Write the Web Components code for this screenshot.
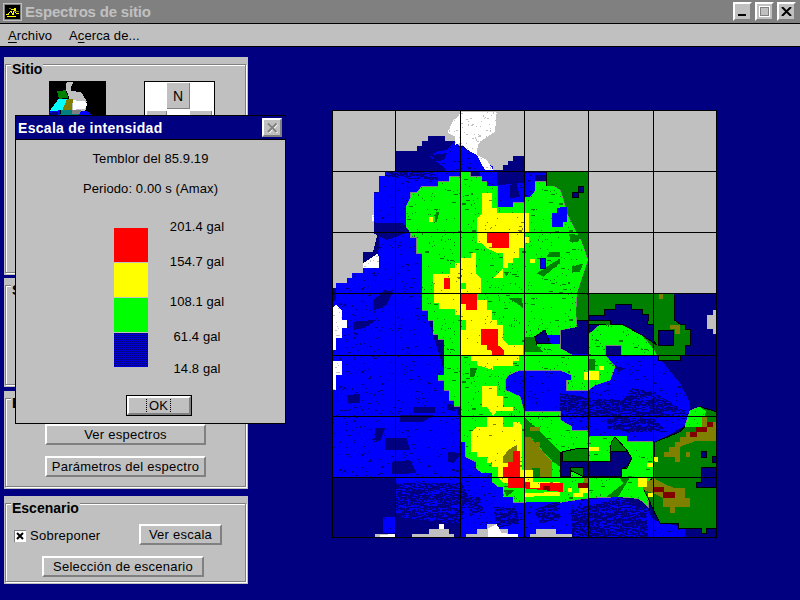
<!DOCTYPE html>
<html>
<head>
<meta charset="utf-8">
<title>Espectros de sitio</title>
<style>
  html, body { margin: 0; height: 100%; background: #000080; overflow: hidden; }
  body { position: relative; font-family: "Liberation Sans", Arial, sans-serif; font-size: 13px; color: #000; }
  .main { display: flex; align-items: flex-start; padding: 10px 0 0 4px; }
  .col { width: 244px; flex: none; display: flex; flex-direction: column; }
  .stack { display: flex; flex-direction: column; align-items: center; gap: 11px; padding-top: 25px; }
  .sitio { display: flex; justify-content: flex-start; gap: 38px; padding: 16px 0 0 43px; }
</style>
</head>
<body>
<title-bar>Espectros de sitio</title-bar>
<menu-bar></menu-bar>
<div class="main">
  <div class="col">
    <group-box label="Sitio" style="height:218px">
      <div class="sitio"><site-thumb></site-thumb><compass-pad></compass-pad></div>
    </group-box>
    <group-box label="Suelo" style="height:109px;margin-top:3px"></group-box>
    <group-box label="Espectro" style="height:98px;margin-top:4px">
      <div class="stack">
        <win-button style="width:161px;height:21px">Ver espectros</win-button>
        <win-button style="width:161px;height:21px">Parámetros del espectro</win-button>
      </div>
    </group-box>
    <group-box label="Escenario" style="height:88px;margin-top:7px">
      <scenario-form></scenario-form>
    </group-box>
  </div>
  <intensity-map style="margin:53px 0 0 84px"></intensity-map>
</div>
<scale-dialog></scale-dialog>

<script>
const bevel = `border: 2px solid; border-color: #fff #808080 #808080 #fff; background: #c0c0c0; box-sizing: border-box;`;

class TitleBar extends HTMLElement {
  connectedCallback() {
    this.attachShadow({ mode: 'open' });
    this.shadowRoot.innerHTML = `
      <style>
        :host { display: flex; align-items: center; height: 23px; background: #808080; border-bottom: 1px solid #000; padding: 0 4px 0 3px; }
        .icon { width: 19px; height: 18px; flex: none; display: block; }
        .name { flex: 1; margin-left: 3px; color: #c0c0c0; font: bold 15px "Liberation Sans", Arial, sans-serif; letter-spacing: -.2px; }
        .btns { display: flex; gap: 3px; }
        .b { ${bevel} width: 19px; height: 19px; display: flex; align-items: center; justify-content: center; }
        svg { display: block; }
      </style>
      <svg class="icon" viewBox="0 0 19 18" shape-rendering="crispEdges">
        <rect width="19" height="18" fill="#c0c0c0"/><rect x="1" y="1" width="17" height="16" fill="#808080"/>
        <rect x="2" y="2" width="15" height="14" fill="#000"/>
        <path d="M3 11h3M5 11l3-3 2 4 2-7 1 5h3M8 6h5M4 13h9" stroke="#ff0" fill="none"/>
        <path d="M11 8h5M6 5h2" stroke="#808000" fill="none"/>
      </svg>
      <span class="name"><slot></slot></span>
      <div class="btns">
        <div class="b"><svg width="9" height="9" shape-rendering="crispEdges"><rect x="0" y="7" width="8" height="2" fill="#000"/></svg></div>
        <div class="b"><svg width="11" height="11" shape-rendering="crispEdges"><rect x=".5" y=".5" width="10" height="10" fill="none" stroke="#fff"/><rect x="1.5" y="1.5" width="8" height="8" fill="none" stroke="#808080"/></svg></div>
        <div class="b"><svg width="11" height="9"><path d="M1 0l9 9M10 0l-9 9" stroke="#000" stroke-width="2" fill="none"/></svg></div>
      </div>`;
  }
}
customElements.define('title-bar', TitleBar);

class MenuBar extends HTMLElement {
  connectedCallback() {
    this.attachShadow({ mode: 'open' });
    this.shadowRoot.innerHTML = `
      <style>
        :host { display: flex; align-items: center; gap: 17px; height: 22px; background: #c0c0c0; padding: 0 8px; border-bottom: 1px solid #000; font: 13px "Liberation Sans", Arial, sans-serif; letter-spacing: .1px; }
        u { text-underline-offset: 2px; }
      </style>
      <span><u>A</u>rchivo</span>
      <span>A<u>c</u>erca de...</span>`;
  }
}
customElements.define('menu-bar', MenuBar);

class GroupBox extends HTMLElement {
  connectedCallback() {
    this.attachShadow({ mode: 'open' });
    this.shadowRoot.innerHTML = `
      <style>
        :host { display: block; background: #c0c0c0; box-sizing: border-box; padding: 7px 2px 2px 1px; }
        .frame { position: relative; height: 100%; box-sizing: border-box; border: 1px solid #808080; box-shadow: 1px 1px 0 #fff, inset 1px 1px 0 #fff; }
        .label { position: absolute; left: 5px; top: -3px; padding: 0 1px; background: #c0c0c0; font: bold 14px/15px "Liberation Sans", Arial, sans-serif; }
      </style>
      <div class="frame"><span class="label"></span><slot></slot></div>`;
    this.shadowRoot.querySelector('.label').textContent = this.getAttribute('label');
  }
}
customElements.define('group-box', GroupBox);

class WinButton extends HTMLElement {
  connectedCallback() {
    this.attachShadow({ mode: 'open' });
    this.shadowRoot.innerHTML = `
      <style>
        :host { ${bevel} display: flex; align-items: center; justify-content: center; font: 13px "Liberation Sans", Arial, sans-serif; letter-spacing: .25px; white-space: nowrap; }
      </style>
      <slot></slot>`;
  }
}
customElements.define('win-button', WinButton);

class SiteThumb extends HTMLElement {
  connectedCallback() {
    this.attachShadow({ mode: 'open' });
    const shapes = [
      ['#c0c0c0', '65,15 85,15 78,30 78,42 108,45 125,72 120,110 80,112 72,60 62,35'],
      ['#008000', '36,42 62,40 70,62 42,66'],
      ['#00ffff', '40,66 66,66 55,100 14,102'],
      ['#808000', '66,66 84,66 80,100 52,100'],
      ['#fff', '84,70 120,72 128,84 118,96 84,98'],
      ['#008080', '48,100 105,100 105,120 45,120'],
      ['#808080', '80,98 110,98 105,110 80,110'],
      ['#0000ff', '14,102 46,100 46,120 10,120'],
      ['#0000ff', '108,102 130,104 146,118 146,120 100,120'],
      ['#000080', '12,108 40,104 40,120 12,120']
    ];
    const polys = shapes.map(s => `<polygon fill="${s[0]}" points="${s[1]}"/>`).join('');
    this.shadowRoot.innerHTML = `
      <style>:host { display: block; width: 57px; height: 40px; flex: none; } svg { display: block; }</style>
      <svg width="57" height="40" viewBox="12 12 171 120" shape-rendering="crispEdges"><rect x="12" y="12" width="171" height="120" fill="#000"/>${polys}</svg>`;
  }
}
customElements.define('site-thumb', SiteThumb);

class CompassPad extends HTMLElement {
  connectedCallback() {
    this.attachShadow({ mode: 'open' });
    this.shadowRoot.innerHTML = `
      <style>
        :host { display: grid; grid-template-columns: 20px 23px 22px; grid-auto-rows: 26px; row-gap: 2px; justify-content: center; width: 71px; height: 60px; background: #fff; border: 1px solid #000; box-sizing: border-box; padding: 1px 0; }
        .k { background: #c0c0c0; border-right: 1px solid #808080; border-bottom: 1px solid #808080; display: flex; align-items: center; justify-content: center; font: 14px "Liberation Sans", Arial, sans-serif; }
      </style>
      <span></span><div class="k">N</div><span></span>
      <div class="k"></div><span></span><div class="k"></div>`;
  }
}
customElements.define('compass-pad', CompassPad);

class ScenarioForm extends HTMLElement {
  connectedCallback() {
    this.attachShadow({ mode: 'open' });
    this.shadowRoot.innerHTML = `
      <style>
        :host { display: block; padding: 20px 0 0 8px; font: 13px "Liberation Sans", Arial, sans-serif; letter-spacing: .25px; }
        .row { display: flex; align-items: center; }
        .chk { display: flex; align-items: center; gap: 4px; width: 125px; padding-top: 2px; }
        .box { width: 12px; height: 12px; flex: none; display: block; }
        .wide { margin: 11px 0 0 28px; }
      </style>
      <div class="row">
        <label class="chk">
          <svg class="box" viewBox="0 0 12 12" shape-rendering="crispEdges">
            <rect width="12" height="12" fill="#fff"/><path d="M0 11.5V0h11.5" fill="none" stroke="#808080" transform="translate(.5 .5)"/>
            <path d="M3 3l6 6M9 3l-6 6" stroke="#000" stroke-width="2" shape-rendering="auto"/>
          </svg>
          <span>Sobreponer</span>
        </label>
        <win-button style="width:83px;height:21px">Ver escala</win-button>
      </div>
      <win-button class="wide" style="width:162px;height:21px">Selección de escenario</win-button>`;
  }
}
customElements.define('scenario-form', ScenarioForm);

class ScaleDialog extends HTMLElement {
  connectedCallback() {
    this.attachShadow({ mode: 'open' });
    this.shadowRoot.innerHTML = `
      <style>
        :host { position: absolute; left: 15px; top: 115px; width: 271px; height: 309px; box-sizing: border-box; border: 1px solid #000; background: #c0c0c0; display: flex; flex-direction: column; font: 13px "Liberation Sans", Arial, sans-serif; letter-spacing: .1px; }
        .cap { height: 23px; flex: none; background: #000080; border-bottom: 1px solid #000; display: flex; align-items: center; justify-content: space-between; padding: 0 3px 0 2px; color: #fff; font: bold 14px "Liberation Sans", Arial, sans-serif; letter-spacing: .3px; }
        .x { ${bevel} width: 20px; height: 19px; display: flex; align-items: center; justify-content: center; }
        .line { text-align: center; }
        .t1 { margin-top: 11px; }
        .t2 { margin-top: 15px; }
        .legend { display: flex; margin: 32px 0 0 98px; }
        .bars { display: flex; flex-direction: column; gap: 1px; width: 34px; }
        .bars i, .bars svg { display: block; height: 34px; }
        .labels { width: 70px; margin: -9px 0 0 14px; display: flex; flex-direction: column; align-items: center; }
        .labels span { display: block; height: 15px; line-height: 15px; }
        .ok { align-self: center; margin: 19px 0 0 16px; width: 66px; height: 21px; border: 1px solid #000; box-sizing: border-box; display: flex; }
        .ok div { ${bevel} flex: 1; display: flex; align-items: center; justify-content: center; }
        .ok b { font-weight: normal; border: 1px dotted #000; border-width: 0 1px; padding: 0 2px; line-height: 13px; }
      </style>
      <div class="cap"><span>Escala de intensidad</span>
        <div class="x"><svg width="12" height="11"><path d="M2 1.5l8.5 8.5M10.5 1.5L2 10" stroke="#fff" stroke-width="2" fill="none" transform="translate(.7 .7)"/><path d="M2 1.5l8.5 8.5M10.5 1.5L2 10" stroke="#808080" stroke-width="2" fill="none"/></svg></div>
      </div>
      <div class="line t1">Temblor del 85.9.19</div>
      <div class="line t2">Periodo: 0.00 s (Amax)</div>
      <div class="legend">
        <div class="bars"><i style="background:#f00"></i><i style="background:#ff0"></i><i style="background:#0f0"></i>
          <svg width="34" height="34" shape-rendering="crispEdges"><defs><pattern id="dith" width="2" height="2" patternUnits="userSpaceOnUse"><rect width="2" height="2" fill="#0000e0"/><rect width="1" height="1" fill="#000080"/><rect x="1" y="1" width="1" height="1" fill="#000080"/></pattern></defs><rect width="34" height="34" fill="url(#dith)"/></svg>
        </div>
        <div class="labels">
          <span>201.4 gal</span><span style="margin-top:20px">154.7 gal</span><span style="margin-top:25px">108.1 gal</span><span style="margin-top:20px">61.4 gal</span><span style="margin-top:17px">14.8 gal</span>
        </div>
      </div>
      <div class="ok"><div><b>OK</b></div></div>`;
  }
}
customElements.define('scale-dialog', ScaleDialog);

// map shapes are traced in crop coords: key = crop offset, then x/3 + ox, y/3 + oy
const crops = { a: [320, 100], b: [560, 100], c: [320, 320], d: [560, 320], p: null };
function pts(key, s) {
  const o = crops[key];
  return s.trim().split(/\s+/).map(q => {
    const [x, y] = q.split(',').map(Number);
    return o ? (o[0] + x / 3).toFixed(1) + ',' + (o[1] + y / 3).toFixed(1) : x + ',' + y;
  }).join(' ');
}
function many() {
  const out = [];
  for (let i = 0; i < arguments.length; i += 2) out.push(pts(arguments[i], arguments[i + 1]));
  return out.join(' ');
}
function rectZ(key, x1, y1, x2, y2) {
  return pts(key, `${x1},${y1} ${x2},${y1} ${x2},${y2} ${x1},${y2}`);
}

class IntensityMap extends HTMLElement {
  speck(id, w, h, n, color, seed, big) {
    let s = seed, r = '';
    const rnd = m => { s = (s * 16807) % 2147483647; return s % m; };
    for (let i = 0; i < n; i++) {
      const bw = 1 + (rnd(5) === 0 ? big : 0), bh = 1 + (rnd(9) === 0 ? 1 : 0);
      r += `<rect x="${rnd(w)}" y="${rnd(h)}" width="${bw}" height="${bh}"/>`;
    }
    return `<pattern id="${id}" patternUnits="userSpaceOnUse" width="${w}" height="${h}"><g fill="${color}">${r}</g></pattern>`;
  }
  connectedCallback() {
    this.attachShadow({ mode: 'open' });

    const land = many('p', '395,151 417,151 417,146 422,146 422,141 428,141 428,136 445,136 445,141 455,141 455,146 470,146 470,151 477,151 477,160 483,160 488,165 492,170 503,170 503,165 508,165 508,161 513,161 513,156 524,156 524,171 588,171 588,293 717,293 717,538 332,538 332,288 336,288 336,283 347,283 347,278 352,278 352,273 363,273 363,252 373,252 378,232 374,232 374,192 379,192 379,176 385,176 385,171 395,171');

    const blue = [
      pts('a', '330,170 350,155 380,150 405,125 420,138 450,155 470,165 490,185 520,200 520,213 380,213 370,200'),
      many('a', '195,213 420,213 450,230 485,245 530,258 535,250 620,250 620,320 600,330 600,400 420,400 420,580 330,640 325,660',
           'c', '420,300 720,300 720,490 420,490 225,490 225,472 35,472 35,0',
           'a', '35,660 35,605 48,600 48,548 80,548 80,533 97,533 97,518 130,518 130,505 175,505 175,455 178,430 175,395 162,362 162,275 178,275 178,228 195,228'),
      pts('a', '480,215 530,215 530,258 480,240'),
      pts('a', '615,220 677,220 677,245 645,245 645,275 630,292 615,292'),
      pts('c', '555,170 600,150 720,150 720,290 555,290'),
      pts('d', '0,100 150,105 290,105 360,190 390,250 390,290 370,320 325,345 290,365 200,365 200,350 85,350 0,320'),
      pts('c', '420,480 720,480 720,652 600,652 420,652 420,600 450,540'),
      pts('d', '0,540 60,540 30,652 0,652'),
      pts('d', '60,540 170,530 200,540 60,570'),
      pts('d', '262,565 280,600 320,610 375,625 375,652 262,652'),
      pts('c', '190,590 225,590 225,640 190,640')
    ];
    // third value: mottle the blob with blue so it is not a flat shape
    const navyBlobs = [
      ['a', '162,370 250,370 270,395 200,420 162,400'],
      ['a', '335,165 380,160 372,180 345,185'],
      ['a', '160,600 195,570 220,575 200,615 160,630'],
      ['a', '205,213 355,213 355,240 240,235 195,228', 1],
      ['a', '530,213 612,213 612,248 530,256'],
      ['a', '570,255 590,250 600,290 570,295'],
      ['a', '645,225 677,225 677,245 645,245'],
      ['c', '100,5 170,0 130,25 100,30'],
      ['c', '195,355 260,355 270,390 195,390'],
      ['c', '165,325 195,325 180,365 165,360'],
      ['c', '215,425 270,420 290,460 215,462'],
      ['c', '240,285 340,285 310,305 240,305'],
      ['c', '385,395 425,400 400,430 385,425'],
      ['c', '280,260 345,260 345,280 280,280'],
      ['c', '80,225 120,222 120,250 85,250'],
      ['c', '380,250 420,260 400,272 380,270'],
      ['d', '0,220 100,235 190,240 215,205 280,215 375,275 390,290 300,290 0,290', 1],
      ['d', '140,290 280,295 320,335 200,335 140,325', 1],
      ['d', '165,138 195,145 175,155'],
      ['c', '720,5 660,45 720,45'],
      ['c', '440,530 480,530 490,570 450,590', 1],
      ['c', '520,560 590,565 600,610 530,625', 1],
      ['c', '640,570 720,540 720,600 660,610', 1],
      ['d', '30,570 175,535 260,565 265,652 40,652', 1]
    ];

    const mainGreen = many(
      'a', '355,245 388,245 388,230 420,230 420,215 450,215 450,230 485,230 485,245 500,245 500,258 532,258 532,322 580,322 580,308 613,308 613,292 630,292 645,275 645,245 677,245 677,258 700,258 720,270',
      'b', '10,300 22,345 45,390 62,420 83,480 70,520 50,580 47,640',
      'd', '50,20 0,30 0,85 35,105 135,105 165,140 150,180 105,195 85,210 20,210 20,180 35,180 35,165 0,150',
      'c', '720,150 600,150 565,165 555,180 555,210 600,230 612,275 720,275 720,530 613,547 580,547 580,530 550,530 550,500 535,500 517,485 517,458 485,458 468,443 468,425 437,410 437,365 420,365 420,258 403,258 403,240 388,240 388,210 372,210 372,180 355,180 355,165 372,165 372,58 355,58 355,42 340,42 340,0',
      'a', '325,660 325,630 306,630 306,460 290,460 290,412 272,412 272,397 258,380 258,322 272,292 272,278 290,278 305,260 355,260');
    const greens = [
      mainGreen,
      pts('d', '120,15 185,15 245,45 280,88 290,105 185,105 185,75 135,75 135,105 85,105 85,45'),
      pts('d', '0,300 35,320 35,332 85,332 85,348 200,348 200,365 280,365 280,470 250,505 265,535 265,560 250,545 233,535 180,530 90,533 0,547'),
      pts('d', '370,590 385,595 440,612 440,625 375,625'),
      pts('d', '285,550 305,550 305,590 285,570'),
      pts('d', '390,272 420,260 438,275 438,320 375,320')
    ];

    const darkGreenLined = [
      pts('p', '546,171 588,171 588,320 546,320'),
      many('p', '588,293 674,293', 'd', '343,0 360,12 375,12 375,28 390,28 390,75 375,75 375,105 360,105 360,120 295,120 295,105 280,105 280,88 135,20 135,12 85,12'),
      many('d', '285,365 325,350 360,335 375,320 400,275 420,260 469,275 469,410 460,410 460,428 469,428 469,625 440,625 440,640 425,640 425,625 355,625 355,610 300,610 280,570 265,535 250,505 280,470'),
      pts('d', '8,395 55,385 85,385 85,425 150,425 150,393 155,365 165,350 200,390 215,415 200,445 185,445 185,470 70,470 8,440')
    ];
    const navyLined = [
      many('b', '85,660 85,645 132,645 132,628 165,628 165,612 215,612 215,628 248,628 248,643 265,643 265,660', 'd', '262,12 280,12 280,60 290,75 245,45 185,12 150,12 150,0 85,0'),
      pts('d', '295,30 340,30 340,75 295,75'),
      pts('d', '0,400 8,395 8,425 150,425 150,393 200,393 215,415 200,440 185,445 185,470 70,470 70,443 30,443 30,470 0,470'),
      pts('d', '425,443 469,443 469,503 408,503 408,487 425,487'),
      rectZ('d', 423, 393, 440, 412),
      pts('d', '458,410 469,410 469,428 458,428'),
      rectZ('b', 37, 277, 55, 293), rectZ('b', 55, 259, 71, 277)
    ];

    const yellow = [
      pts('a', '487,280 515,280 515,325 532,325 532,340 628,340 628,397 613,397 613,445 597,445 597,475 580,475 580,490 565,490 565,505 550,505 550,535 520,535 533,520 550,505 550,460 533,460 500,445 485,430 470,430 470,355 487,340'),
      pts('a', '340,522 390,522 390,505 405,505 405,490 420,490 420,475 453,475 453,460 468,460 468,520 483,535 483,580 470,580 470,600 500,600 500,630 515,630 515,660 420,660 420,645 405,645 405,627 358,627 358,610 342,610'),
      pts('c', '420,30 438,30 438,0 530,0 530,15 550,15 550,60 565,75 610,75 610,105 597,105 597,122 580,122 580,137 520,137 520,150 470,135 470,122 453,122 453,105 420,105'),
      pts('c', '487,197 530,197 530,228 550,228 550,260 580,260 580,272 530,272 520,288 500,260 487,260'),
      pts('c', '500,290 550,290 550,320 580,320 580,305 597,305 607,320 607,450 640,450 640,490 550,490 535,472 535,442 517,442 517,428 500,428 500,410 470,410 470,395 453,395 453,335 470,322 500,320'),
      rectZ('a', 613, 412, 628, 428), rectZ('a', 630, 478, 645, 490), rectZ('a', 327, 352, 340, 365),
      pts('d', '72,155 85,155 85,152 118,152 118,180 72,180'), rectZ('d', 118, 138, 132, 150),
      rectZ('d', 85, 380, 118, 393), rectZ('d', 262, 430, 280, 440), rectZ('d', 282, 410, 295, 425),
      rectZ('d', 233, 473, 262, 500), rectZ('d', 265, 520, 280, 530), rectZ('d', 25, 505, 35, 515),
      rectZ('d', 40, 518, 70, 530), rectZ('d', 58, 505, 85, 518),
      pts('c', '612,487 720,487 720,530 612,530')
    ];
    const red = [
      pts('a', '500,397 567,397 567,445 517,445 517,428 500,428'),
      rectZ('a', 372, 533, 390, 567),
      pts('a', '422,580 470,580 470,630 437,630 437,613 422,613'),
      pts('c', '483,27 533,27 533,75 552,90 552,105 517,105 517,92 500,90 500,75 483,75'),
      pts('c', '580,393 600,393 600,472 612,472 612,505 565,505 565,472 550,472 550,440 565,440 565,425 580,425'),
      pts('c', '612,487 630,487 630,503 660,503 660,490 720,490 720,515 660,518 612,518'),
      rectZ('d', 0, 490, 8, 515)
    ];
    const tile = (c, list) => list.map(p => `<polygon fill="${c}" points="${p}"/>`).join('');

    const overGreenDark = [
      pts('a', '347,335 358,335 350,365 345,365'),
      pts('a', '565,595 605,595 610,625 590,610'),
      pts('a', '690,455 720,455 720,470 680,470'),
      pts('a', '650,520 720,475 720,490 670,530'),
      pts('a', '550,515 568,515 560,530'),
      pts('c', '450,143 472,143 462,172 450,170'),
      pts('c', '615,50 650,50 650,75 668,95 615,95'),
      pts('c', '613,290 660,335 720,395 720,440 693,420 630,350 613,350'),
      rectZ('c', 635, 445, 660, 472),
      pts('b', '28,402 65,405 55,425 30,425'),
      pts('b', '35,500 70,490 60,515 35,518'),
      rectZ('d', 85, 118, 105, 150),
      pts('d', '140,530 190,490 180,475 210,472 175,530'),
      pts('c', '550,510 585,510 560,530')
    ];
    const olive = [
      pts('c', '550,410 565,390 590,375 590,393 580,393 580,425 550,430'),
      pts('c', '613,350 630,350 695,425 695,472 660,472 660,445 635,445 635,472 620,472 613,440'),
      rectZ('c', 630, 320, 660, 333), rectZ('c', 647, 365, 660, 378),
      pts('d', '425,290 440,290 440,305 469,305 469,362 410,362 360,380 360,425 345,425 345,410 312,410 312,395 328,395 328,380 345,380 345,365 360,365 360,350 378,350 378,335 408,335 408,320 425,320'),
      rectZ('d', 378, 395, 390, 410),
      pts('d', '250,490 283,475 310,490 345,505 375,505 375,535 390,535 390,560 345,560 345,578 330,578 330,560 310,560 310,535 280,520 250,510'),
      pts('d', '330,15 360,15 360,42 345,42 345,28 330,28'),
      rectZ('b', 297, 582, 309, 597),
      rectZ('d', 72, 475, 85, 488)
    ];
    const maroon = [
      pts('d', '408,320 440,320 440,305 460,305 460,320 440,320 440,335 408,335'),
      rectZ('d', 390, 335, 410, 350),
      pts('d', '283,500 312,500 312,517 345,517 345,534 310,534 310,517 283,517'),
      rectZ('d', 55, 488, 85, 503),
      rectZ('c', 670, 498, 690, 518)
    ];

    const whites = [
      pts('a', '385,90 400,60 415,50 420,35 530,35 525,95 480,125 470,150 470,165 500,180 520,210 495,210 470,165 450,155 420,130 405,135 405,110 385,100'),
      pts('a', '130,490 175,460 178,503 130,503'), rectZ('a', 155, 345, 162, 362),
      pts('a', '35,630 48,612 65,630 65,660 35,660'),
      pts('c', '35,0 80,0 80,25 65,25 65,55 48,55 48,90 35,90'),
      pts('c', '35,122 65,122 65,165 48,165 48,210 35,210')
    ];
    const grays = [
      pts('c', '275,642 327,642 327,627 357,627 357,612 372,612 372,627 387,627 387,642 402,642 402,652 275,652'),
      pts('c', '437,642 470,642 470,627 500,627 500,612 530,612 530,627 565,627 565,642 595,642 595,652 437,652'),
      pts('c', '630,642 647,642 647,627 708,627 708,642 720,642 720,652 630,652'),
      rectZ('d', 0, 642, 36, 652),
      pts('d', '440,0 469,0 469,42 460,42 460,28 440,28'),
      pts('b', '440,660 440,645 459,645 459,630 469,630 469,660'),
      pts('c', '165,642 225,642 225,652 165,652')
    ];
    const whiteBits = [
      pts('c', '180,645 225,642 225,652 180,652'),
      pts('c', '505,625 530,612 545,640 595,642 595,652 505,652'),
      rectZ('c', 357, 612, 372, 627)
    ];

    let grid = '';
    [332, 395, 460, 524, 588, 653, 716].forEach(x => grid += `<path d="M${x}.5 110V538"/>`);
    [110, 171, 232, 293, 355, 416, 477, 537].forEach(y => grid += `<path d="M332 ${y}.5H717"/>`);

    this.shadowRoot.innerHTML = `
      <style>
        :host { display: block; width: 387px; height: 429px; flex: none; }
        svg { display: block; }
      </style>
      <svg width="387" height="429" viewBox="332 110 387 429" shape-rendering="crispEdges">
        <defs>
          ${this.speck('sg', 97, 89, 170, '#008000', 11, 3)}
          ${this.speck('sb', 113, 83, 230, '#000080', 29, 2)}
          ${this.speck('sy', 61, 47, 24, '#808000', 7, 2)}
          ${this.speck('sw', 41, 37, 60, '#c0c0c0', 5, 1)}
          ${this.speck('web', 53, 47, 560, '#0000ff', 101, 3)}
        </defs>
        <rect x="332" y="110" width="385" height="428" fill="#c0c0c0"/>
        <polygon points="${land}" fill="#000080"/>
        ${blue.map(p => `<polygon points="${p}" fill="#00f"/><polygon points="${p}" fill="url(#sb)"/>`).join('')}
        <polygon points="${pts('c', '225,490 420,490 450,540 420,610 400,610 225,590')}" fill="url(#web)"/>
        ${navyBlobs.map(n => `<polygon points="${pts(n[0], n[1])}" fill="#000080"/>` + (n[2] ? `<polygon points="${pts(n[0], n[1])}" fill="url(#web)"/>` : '')).join('')}
        ${darkGreenLined.slice(0, 2).map(p => `<polygon points="${p}" fill="#008000" stroke="#000"/>`).join('')}
        ${greens.map(p => `<polygon points="${p}" fill="#808080" stroke="#808080" stroke-width="1"/>`).join('')}
        ${greens.map(p => `<polygon points="${p}" fill="#0f0"/><polygon points="${p}" fill="url(#sg)"/>`).join('')}
        ${darkGreenLined.slice(2).map(p => `<polygon points="${p}" fill="#008000" stroke="#000"/>`).join('')}
        ${tile('#008000', overGreenDark)}
        ${greens.slice(5).map(p => `<polygon points="${p}" fill="#0f0"/><polygon points="${p}" fill="url(#sg)"/>`).join('')}
        ${navyLined.map(p => `<polygon points="${p}" fill="#000080" stroke="#000"/>`).join('')}
        <polygon points="${pts('c', '650,45 720,45 720,72 650,72')}" fill="#00f"/>
        <polygon points="${pts('c', '645,50 675,30 690,70 650,72')}" fill="#000080" stroke="#000"/>
        <polygon points="${pts('a', '695,340 710,340 710,325 720,325 720,380 695,380')}" fill="#00f"/>
        <polygon points="${pts('b', '0,322 22,322 22,365 8,365 8,380 0,380')}" fill="#00f"/>
        <polygon points="${pts('a', '662,475 676,475 676,505 662,505')}" fill="#00f" stroke="#000080"/>
        ${tile('#808000', olive)}
        ${yellow.map(p => `<polygon points="${p}" fill="#ff0"/><polygon points="${p}" fill="url(#sy)"/>`).join('')}
        ${tile('#808000', olive.slice(0, 1))}
        ${tile('#f00', red)}
        ${tile('#800000', maroon)}
        <polygon points="${pts('a', '422,548 438,548 438,567 422,567')}" fill="#0f0"/>
        <polygon points="${pts('c', '613,505 720,515 720,530 612,532')}" fill="#0f0"/>
        <polygon points="${pts('c', '612,518 660,518 720,515 720,528 612,530')}" fill="#ff0"/>
        <polygon points="${pts('c', '612,532 720,532 720,547 613,547')}" fill="#0f0"/>
        ${tile('#fff', whites)}
        ${whites.map(p => `<polygon points="${p}" fill="url(#sw)"/>`).join('')}
        ${tile('#c0c0c0', grays)}
        ${tile('#fff', whiteBits)}
        <g stroke="#000" fill="none" stroke-width="1">${grid}</g>
      </svg>`;
  }
}
customElements.define('intensity-map', IntensityMap);
</script>
</body>
</html>
